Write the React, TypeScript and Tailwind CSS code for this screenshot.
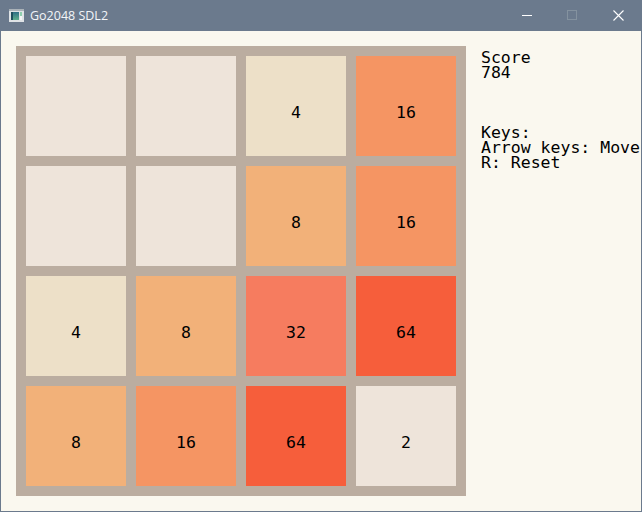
const tileClass: Record<number, string> = {
  0: "bg-[#eee4da]",
  2: "bg-[#eee4da]",
  4: "bg-[#ede0c8]",
  8: "bg-[#f2b179]",
  16: "bg-[#f59563]",
  32: "bg-[#f67c5f]",
  64: "bg-[#f65e3b]",
};

const board = [0, 0, 4, 16, 0, 0, 8, 16, 4, 8, 32, 64, 8, 16, 64, 2];

export default function App() {
  return (
    <div className="w-[642px] h-[512px] flex flex-col overflow-hidden bg-[#6b7a8d] px-px pb-px pt-px">
      <div className="h-[30px] shrink-0 flex items-center text-white">
        <svg width="15" height="13" viewBox="0 0 15 13" className="ml-[8px] mr-[6px] mb-[1px]">
          <defs>
            <linearGradient id="pane" x1="0" y1="0" x2="0" y2="1">
              <stop offset="0" stopColor="#2f6f86" />
              <stop offset="1" stopColor="#5fae8c" />
            </linearGradient>
          </defs>
          <rect x="0" y="0" width="15" height="13" fill="#dfe3e6" />
          <rect x="0" y="0" width="15" height="2" fill="#aab2b8" />
          <rect x="2" y="3" width="8" height="8" fill="url(#pane)" />
          <rect x="2" y="3" width="2" height="8" fill="#1f4f5e" />
          <rect x="11" y="3" width="2" height="4" fill="#8fcfae" />
          <rect x="11" y="7" width="2" height="4" fill="#f4f6f6" />
        </svg>
        <span className="text-[12.5px] text-[#f2f5f8] font-['Open_Sans','Noto_Sans',sans-serif]">Go2048 SDL2</span>
        <div className="ml-auto flex items-center mb-[2px]">
          <div className="w-[44px] flex justify-center">
            <svg width="10" height="10" viewBox="0 0 10 10"><path d="M0 5.5H10" stroke="#fff" strokeWidth="1" /></svg>
          </div>
          <div className="w-[46px] flex justify-center">
            <svg width="10" height="10" viewBox="0 0 10 10"><rect x="0.5" y="0.5" width="9" height="9" fill="none" stroke="#84929f" /></svg>
          </div>
          <div className="w-[46px] flex justify-center">
            <svg width="11" height="11" viewBox="0 0 11 11"><path d="M0.5 0.5L10.5 10.5M10.5 0.5L0.5 10.5" stroke="#fff" strokeWidth="1.1" /></svg>
          </div>
        </div>
      </div>
      <div className="flex-1 min-h-0 bg-[#faf8ef] flex pl-[15px] pt-[15px] font-['DejaVu_Sans_Mono',monospace] text-black overflow-hidden">
        <div className="w-[450px] h-[450px] shrink-0 bg-[#bbada0] p-[10px] grid grid-cols-4 grid-rows-4 gap-[10px]">
          {board.map((v, i) => (
            <div key={i} className={`flex items-center justify-center text-[16.5px] leading-[15px] pt-[12px] ${tileClass[v]}`}>
              {v > 0 ? v : ""}
            </div>
          ))}
        </div>
        <div className="ml-[15px] pt-[4px] text-[16.5px] leading-[15px] whitespace-nowrap">
          <div>Score</div>
          <div>784</div>
          <div className="mt-[45px]">Keys:</div>
          <div>Arrow keys: Move</div>
          <div>R: Reset</div>
        </div>
      </div>
    </div>
  );
}
